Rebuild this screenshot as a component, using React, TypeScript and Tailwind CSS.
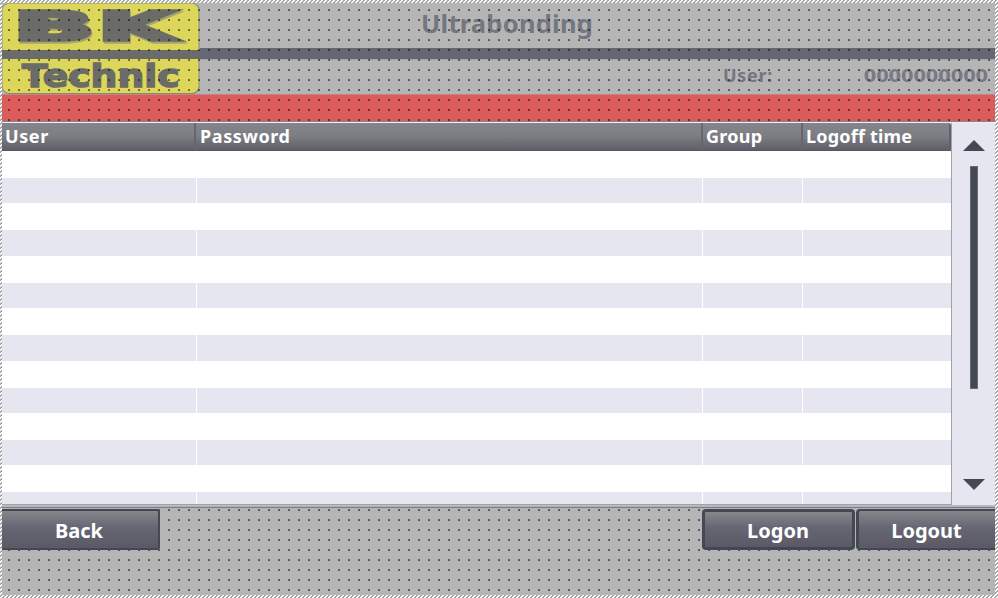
import React from "react";

const FONT = "font-['Noto_Sans','Open_Sans',sans-serif] font-bold";
const STRIPES = [0, 1, 2, 3, 4, 5, 6];
const COLUMNS = "grid grid-cols-[194px_506px_100px_149px]";

function DotGrid({ id, offsetY }: { id: string; offsetY: number }) {
  return (
    <svg className="pointer-events-none absolute inset-0 h-full w-full">
      <defs>
        <pattern id={id} x="6" y={offsetY} width="10" height="10" patternUnits="userSpaceOnUse">
          <rect width="2" height="2" fill="#000" fillOpacity="0.45" />
          <rect width="1" height="1" x="1" y="1" fill="#000" fillOpacity="0.25" />
        </pattern>
      </defs>
      <rect width="100%" height="100%" fill={`url(#${id})`} />
    </svg>
  );
}

function Logo() {
  return (
    <svg width="198" height="91" viewBox="2 3 198 91" className="shrink-0">
      <rect x="2" y="3" width="198" height="91" fill="#b4b4b4" />
      <rect x="2" y="3" width="197.5" height="91" rx="7" fill="#8a8b72" />
      <rect x="2.5" y="3.5" width="196" height="89.5" rx="7" fill="#dcd75b" />
      <g fontFamily="DejaVu Sans" fontWeight="700" fill="#6b6b68" stroke="#6b6b68">
        <g fontSize="39" strokeWidth="3.6" className="drop-shadow-[1px_2px_0px_#a7a46c]">
          <text transform="translate(13.8 40) scale(2.7 1)">B</text>
          <text transform="translate(98.3 40) scale(2.5 1)">K</text>
        </g>
        <text x="22" y="87.3" fontSize="31.5" textLength="157.5" lengthAdjust="spacingAndGlyphs" strokeWidth="1.5">Technic</text>
      </g>
      <rect x="2" y="50" width="198" height="9" fill="#6b6b69" />
    </svg>
  );
}

function HeaderCell({ label, last, spacing }: { label: string; last?: boolean; spacing: string }) {
  return (
    <div className={`h-[28px] border-b border-[#55565f] pl-[3px] ${last ? "rounded-tr-[3px] border-r-2 border-r-[#60616b]" : "border-r-2 border-r-[#656670]"}`}>
      <span className={`block text-[18px] leading-[26px] whitespace-nowrap ${spacing}`}>{label}</span>
    </div>
  );
}

function Button({ label, className }: { label: string; className: string }) {
  return (
    <button className={`flex h-[41px] items-center justify-center border-[#424953] bg-linear-to-b from-[#85878b] via-[#656673] via-45% to-[#5b5965] pt-[2px] text-[20px] leading-none text-white ${className}`}>
      {label}
    </button>
  );
}

export default function App() {
  return (
    <div className={`h-[598px] w-[998px] overflow-hidden bg-[#fafafa] bg-[repeating-linear-gradient(135deg,#a8a8a8_0px,#a8a8a8_1px,#fafafa_1px,#fafafa_2.828px)] pt-[3px] pl-[2px] ${FONT}`}>
      <div className="flex h-[592px] w-[993px] flex-col overflow-hidden bg-[#b5b5b5]">
        <header className="relative">
          <div className="flex h-[91px]">
            <Logo />
            <div className="flex flex-1 flex-col text-[#747680]">
              <div className="flex h-[45px] items-start pt-px pl-[221px]">
                <h1 className="text-[25.5px] leading-[38px] tracking-[0.25px]">Ultrabonding</h1>
              </div>
              <div className="h-[11px] bg-[#656773]" />
              <div className="flex flex-1 justify-between border-t border-[#a2a3a7] pr-[7px] pl-[523px] text-[18px] leading-[31px]">
                <span className="tracking-[0.7px]">User:</span>
                <span className="font-['DejaVu_Sans',sans-serif] tracking-[-0.1px] text-[#777984]">0000000000</span>
              </div>
            </div>
          </div>
          <div className="h-[27px] border-t border-[#bd8585] bg-[#dc5b5b]" />
          <DotGrid id="header-dots" offsetY={6} />
        </header>
        <div className="h-px bg-[#85858c]" />
        <div className="h-px bg-[#ededf4]" />
        <main className="flex h-[383px] border-b border-[#b9bbc0]">
          <section className="flex w-[950px] flex-col overflow-hidden border-r border-b border-[#a0a2a8] bg-white">
            <div className={`${COLUMNS} shrink-0 rounded-tr-[3px] bg-linear-to-b from-[#85868a] via-[#7d7e84] via-45% to-[#5e5c68] text-white`}>
              <HeaderCell label="User" spacing="tracking-[0.6px]" />
              <div className="-mr-px pl-px">
                <HeaderCell label="Password" spacing="tracking-[0.6px]" />
              </div>
              <div className="-mr-px pl-px">
                <HeaderCell label="Group" spacing="tracking-[0.3px]" />
              </div>
              <div className="pl-px">
                <HeaderCell label="Logoff time" spacing="tracking-[0.2px]" last />
              </div>
            </div>
            {STRIPES.map((n) => (
              <div key={n} className={`${COLUMNS} h-[52.4px] shrink-0 pt-[27px]`}>
                <div className="h-[25.4px] bg-[#e6e6f0]" />
                <div className="ml-px h-[25.4px] bg-[#e6e6f0]" />
                <div className="ml-px h-[25.4px] bg-[#e6e6f0]" />
                <div className="ml-px h-[25.4px] bg-[#e6e6f0]" />
              </div>
            ))}
          </section>
          <aside className="flex flex-1 flex-col items-center bg-[#e6e6f0] pt-[17px]">
            <svg width="22" height="11" viewBox="0 0 22 11"><path d="M0 11 11 0l11 11z" fill="#424953" /></svg>
            <div className="mt-[15px] h-[223px] w-[8px] border border-[#646a74] bg-[#424953]" />
            <svg className="mt-[90px]" width="22" height="11" viewBox="0 0 22 11"><path d="M0 0h22L11 11z" fill="#424953" /></svg>
          </aside>
        </main>
        <footer className="relative flex-1 pt-[2px]">
          <DotGrid id="footer-dots" offsetY={3} />
          <div className="absolute inset-x-0 top-px h-px bg-[#777c85]" />
          <div className="relative flex pt-px">
            <Button label="Back" className="w-[158px] rounded-r-[3px] border-y-2 border-r-2 pr-[2px]" />
            <Button label="Logon" className="ml-auto w-[153px] rounded-[4px] border-[3px] pr-px" />
            <Button label="Logout" className="ml-px w-[139px] rounded-l-[4px] border-y-2 border-l-[3px] pr-px" />
          </div>
        </footer>
      </div>
    </div>
  );
}
